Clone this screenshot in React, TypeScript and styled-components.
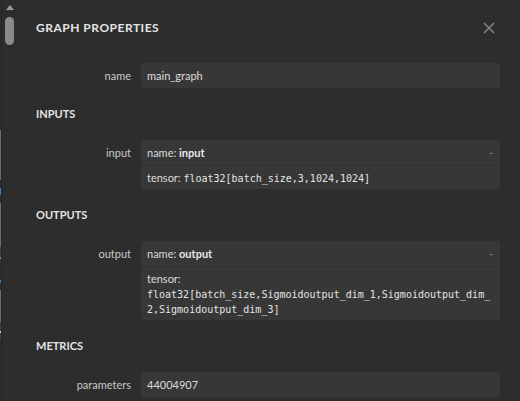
import React from "react";
import styled, { createGlobalStyle } from "styled-components";

const Global = createGlobalStyle`
  html, body { margin: 0; padding: 0; background: #2d2d2d; overflow: hidden; }
  * { box-sizing: border-box; }
`;

const SANS = `"Lato", "Open Sans", "Noto Sans", sans-serif`;
const MONO = `"DejaVu Sans Mono", "Liberation Mono", monospace`;

const Root = styled.div`
  display: flex;
  width: 520px;
  height: 401px;
  background: #2d2d2d;
  font-family: ${SANS};
  overflow: hidden;
`;

const GraphEdge = styled.div`
  width: 1px;
  flex: none;
  background: linear-gradient(
    to bottom,
    #2d2d2d 0px, #2d2d2d 130px,
    #6f6f6f 130px, #6f6f6f 180px,
    #2d2d2d 180px, #2d2d2d 188px,
    #3b82c4 188px, #3b82c4 195px,
    #2d2d2d 195px, #2d2d2d 203px,
    #6f6f6f 203px, #6f6f6f 247px,
    #2f4a3a 247px, #2f4a3a 257px,
    #b08a3a 257px, #b08a3a 259px,
    #2f4a3a 259px, #2f4a3a 262px,
    #2d2d2d 262px, #2d2d2d 280px,
    #3b82c4 280px, #3b82c4 283px,
    #2d2d2d 283px, #2d2d2d 290px,
    #6f6f6f 290px, #6f6f6f 322px,
    #2f4a3a 322px, #2f4a3a 331px,
    #d0d0d0 331px, #d0d0d0 333px,
    #2f4a3a 333px, #2f4a3a 340px,
    #2d2d2d 340px
  );
`;

const Separator = styled.div`
  width: 1px;
  flex: none;
  background: #262626;
`;

const ScrollTrack = styled.div`
  width: 14px;
  flex: none;
  display: flex;
  flex-direction: column;
  align-items: center;
  padding-top: 5px;
  gap: 7px;
  padding-left: 1px;
`;

const ScrollArrow = styled.div`
  width: 0;
  height: 0;
  border-left: 4px solid transparent;
  border-right: 4px solid transparent;
  border-bottom: 5px solid #9a9a9a;
`;

const ScrollThumb = styled.div`
  width: 9px;
  height: 28px;
  border-radius: 4.5px;
  background: #8a8a8a;
`;

const Content = styled.div`
  flex: 1;
  padding: 18px 20px 0 20px;
  display: flex;
  flex-direction: column;
  min-width: 0;
`;

const TitleBar = styled.div`
  display: flex;
  align-items: center;
  justify-content: space-between;
  height: 20px;
`;

const Title = styled.div`
  font-weight: 700;
  font-size: 12px;
  letter-spacing: 0.5px;
  color: #e4e4e4;
  line-height: 20px;
`;

const CloseButton = styled.div`
  width: 12px;
  height: 12px;
  margin-right: 5px;
  display: flex;
`;

const SectionHeader = styled.div`
  font-weight: 700;
  font-size: 11px;
  color: #e4e4e4;
  height: 20px;
  line-height: 20px;
  margin: 16px 0 16px 0;
`;

const Item = styled.div<{ $top?: number }>`
  display: flex;
  gap: 10px;
  margin-top: ${(p) => p.$top ?? 0}px;
`;

const Label = styled.div`
  width: 95px;
  flex: none;
  text-align: right;
  font-size: 11px;
  color: #c8c8c8;
  line-height: 17px;
  padding-top: 4px;
`;

const ValueBox = styled.div`
  flex: 1;
  min-width: 0;
  background: #373737;
  border-radius: 2px;
  font-size: 11px;
  color: #dcdcdc;
`;

const Line = styled.div<{ $border?: boolean }>`
  padding: 4px 6px 4px 6px;
  line-height: ${(p) => (p.$border ? 15 : 17)}px;
  border-top: ${(p) => (p.$border ? "1px solid #2f2f2f" : "none")};
`;

const Expander = styled.span`
  float: right;
  font-family: ${MONO};
  font-size: 10px;
  color: #8a8a8a;
`;

const Strong = styled.b`
  font-weight: 700;
  color: #e8e8e8;
`;

const Code = styled.code`
  font-family: ${MONO};
  font-size: 10px;
  line-height: 11px;
  color: #e4e4e4;
  overflow-wrap: break-word;
  white-space: pre-wrap;
`;

function CloseIcon() {
  return (
    <svg width="12" height="12" viewBox="0 0 12 12">
      <path d="M1 1 L11 11 M11 1 L1 11" stroke="#8c8c8c" strokeWidth="1.4" fill="none" />
    </svg>
  );
}

export default function App() {
  return (
    <>
      <Global />
      <Root>
        <GraphEdge />
        <Separator />
        <ScrollTrack>
          <ScrollArrow />
          <ScrollThumb />
        </ScrollTrack>
        <Content>
          <TitleBar>
            <Title>GRAPH PROPERTIES</Title>
            <CloseButton>
              <CloseIcon />
            </CloseButton>
          </TitleBar>

          <Item $top={25}>
            <Label>name</Label>
            <ValueBox>
              <Line>main_graph</Line>
            </ValueBox>
          </Item>

          <SectionHeader>INPUTS</SectionHeader>
          <Item>
            <Label>input</Label>
            <ValueBox>
              <Line>
                <Expander>-</Expander>
                name: <Strong>input</Strong>
              </Line>
              <Line $border>
                tensor: <Code>float32[batch_size,3,1024,1024]</Code>
              </Line>
            </ValueBox>
          </Item>

          <SectionHeader>OUTPUTS</SectionHeader>
          <Item>
            <Label>output</Label>
            <ValueBox>
              <Line>
                <Expander>-</Expander>
                name: <Strong>output</Strong>
              </Line>
              <Line $border>
                tensor:{" "}
                <Code>float32[batch_size,Sigmoidoutput_dim_1,Sigmoidoutput_dim_2,Sigmoidoutput_dim_3]</Code>
              </Line>
            </ValueBox>
          </Item>

          <SectionHeader>METRICS</SectionHeader>
          <Item>
            <Label>parameters</Label>
            <ValueBox>
              <Line>44004907</Line>
            </ValueBox>
          </Item>
        </Content>
      </Root>
    </>
  );
}
